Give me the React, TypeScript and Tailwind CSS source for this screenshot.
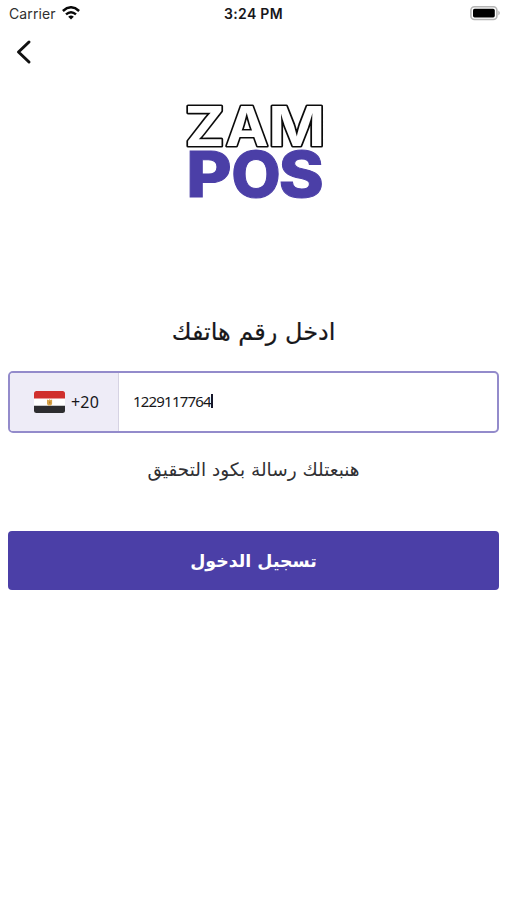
function Logo() {
  return (
    <svg
      width="144"
      height="144"
      viewBox="0 0 144 144"
      role="img"
      aria-label="ZAM POS"
      className="font-['Inter',sans-serif]"
    >
      <g fill="#fff" stroke="#0b0b0b" strokeWidth="3.2" strokeLinejoin="round" paintOrder="stroke" fontSize="55" className="font-bold">
        <text x="2.8" y="65.5" textLength="40" lengthAdjust="spacingAndGlyphs">Z</text>
        <text x="43.6" y="65.5" textLength="43" lengthAdjust="spacingAndGlyphs">A</text>
        <text x="86.3" y="65.5" textLength="57" lengthAdjust="spacingAndGlyphs">M</text>
      </g>
      <g fill="#4b3fa7" stroke="#4b3fa7" strokeWidth="1" fontSize="63" className="font-extrabold">
        <text x="4.2" y="117.3" textLength="45.5" lengthAdjust="spacingAndGlyphs">P</text>
        <text x="49.3" y="117.3" textLength="49.5" lengthAdjust="spacingAndGlyphs">O</text>
        <text x="96.8" y="117.3" textLength="45" lengthAdjust="spacingAndGlyphs">S</text>
      </g>
    </svg>
  );
}

function EgyptFlag() {
  return (
    <svg width="31" height="22" viewBox="0 0 31 22" aria-hidden="true">
      <clipPath id="flag">
        <rect width="31" height="22" rx="2.5" />
      </clipPath>
      <g clipPath="url(#flag)">
        <path fill="#fff" d="M0 0h31v22H0z" />
        <path fill="#d02f2d" d="M0 0h31v7.5H0z" />
        <path fill="#2d2d30" d="M0 14.8h31V22H0z" />
        <path fill="#d7a34a" d="M13 8.4l1.7.8.8-1.2 1 1.1 1.6-.6v4.4l-1.2 1.5h-2.8l-1.1-1.5z" />
        <path fill="#a9721f" d="M15.2 10.6h1.2v2h-1.2z" />
      </g>
    </svg>
  );
}

export default function App() {
  return (
    <div className="flex h-[900px] w-[507px] flex-col bg-white font-['Inter',sans-serif] text-[#17171a]">
      <header className="grid h-7 grid-cols-3 items-center pr-[6px] pl-[9px] text-[13px]">
        <div className="flex items-center gap-[5px]">
          <span className="w-[48px] pb-[2px] text-[14px] tracking-[0.1px] text-[#303030]">Carrier</span>
          <svg width="18" height="14" viewBox="0 0 18 14" fill="none" stroke="#080808" strokeWidth="2.5" className="mb-[2px]">
            <path d="M.9 5Q9-2.4 17.1 5" />
            <path d="M4 8.4q5-4.3 10 0" />
            <path d="M6.2 10.7Q9 8.4 11.8 10.7L9 13.6z" fill="#080808" stroke="none" />
          </svg>
        </div>
        <span className="-ml-[3px] text-center text-[14px] leading-none font-semibold tracking-[0.3px] whitespace-nowrap">3:24 PM</span>
        <svg width="32" height="16" viewBox="0 0 32 16" className="mb-[2px] justify-self-end">
          <rect x="1.9" y="1.7" width="26" height="12.8" rx="3.5" fill="#fff" stroke="#b5b5b5" strokeWidth="1.6" />
          <rect x="4" y="3.8" width="21.8" height="8.6" rx="1.6" fill="#000" />
          <path d="M29.3 5.6q3.2 2.4 0 4.8z" fill="#b5b5b5" />
        </svg>
      </header>
      <nav className="flex h-12 items-center pl-[16px]">
        <button type="button" aria-label="Back">
          <svg width="16" height="26" viewBox="0 0 16 26" fill="none" stroke="#111" strokeWidth="3" strokeLinecap="round" strokeLinejoin="round">
            <path d="M13 3L2.5 13 13 23" />
          </svg>
        </button>
      </nav>
      <main className="flex flex-col px-2">
        <div className="mt-[4px] flex justify-center">
          <Logo />
        </div>
        <h1 dir="rtl" className="mt-[88px] h-[40px] text-center font-['DejaVu_Sans',sans-serif] text-[24px] leading-[40px] whitespace-nowrap [-webkit-text-stroke:0.2px_#17171a]">
          ادخل رقم هاتفك
        </h1>
        <div className="mt-[19px] flex h-[62px] overflow-hidden rounded-[5px] border-2 border-[#938bcb]">
          <div className="flex w-[109px] items-center gap-[6px] border-r border-[#d6d3e3] bg-[#eeecf7] pl-[24px] font-['Noto_Sans',sans-serif] text-[16px]">
            <EgyptFlag />
            <span className="tracking-[0.2px]">+20</span>
          </div>
          <div className="flex items-center pb-[2px] pl-[14px] font-['Noto_Sans',sans-serif] text-[15px]">
            <span className="tracking-[-0.8px]">1229117764</span>
            <span className="h-[14px] w-[2px] bg-[#17172a]" />
          </div>
        </div>
        <p dir="rtl" className="mt-[22px] h-[30px] text-center font-['DejaVu_Sans',sans-serif] text-[18.5px] leading-[30px] whitespace-nowrap text-[#303033]">
          هنبعتلك رسالة بكود التحقيق
        </p>
        <button
          type="button"
          dir="rtl"
          className="mt-[46px] h-[59px] rounded-[4px] bg-[#4b3fa7] pt-px font-['DejaVu_Sans',sans-serif] text-[17.4px] font-bold text-white"
        >
          تسجيل الدخول
        </button>
      </main>
    </div>
  );
}
